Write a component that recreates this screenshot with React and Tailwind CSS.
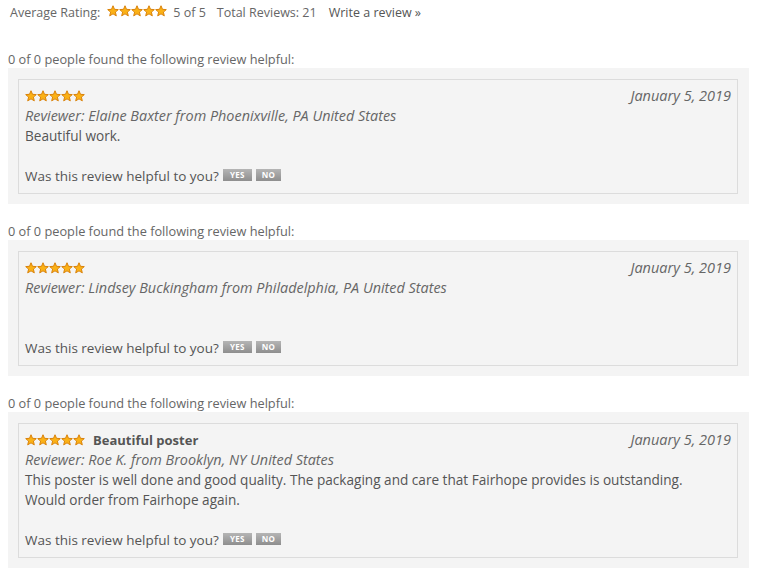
import React from 'react';

const Star = () => (
    <svg width="12" height="12" viewBox="0 0 24 24" className="block">
        <polygon
            points="12,1.5 15,8.6 22.6,9.2 16.8,14.2 18.6,21.7 12,17.7 5.4,21.7 7.2,14.2 1.4,9.2 9,8.6"
            fill="#fbb115"
            stroke="#d9820a"
            strokeWidth="2"
            strokeLinejoin="round"
        />
    </svg>
);

const Stars = () => (
    <span className="inline-flex items-center">
        {[0, 1, 2, 3, 4].map((i) => (
            <Star key={i} />
        ))}
    </span>
);

const VoteButton = ({ label, w }) => (
    <span
        className={`inline-flex items-center justify-center h-[12px] ${w} bg-gradient-to-b from-[#b5b5b5] to-[#8e8e8e] text-white text-[8px] font-bold leading-none tracking-wide`}
    >
        {label}
    </span>
);

const reviews = [
    {
        title: null,
        reviewer: 'Elaine Baxter from Phoenixville, PA United States',
        body: ['Beautiful work.'],
    },
    {
        title: null,
        reviewer: 'Lindsey Buckingham from Philadelphia, PA United States',
        body: [''],
    },
    {
        title: 'Beautiful poster',
        reviewer: 'Roe K. from Brooklyn, NY United States',
        body: [
            'This poster is well done and good quality. The packaging and care that Fairhope provides is outstanding.',
            'Would order from Fairhope again.',
        ],
    },
];

const Review = ({ review }) => (
    <div className="mt-[18px]">
        <div className="px-[8px] h-[18px] text-[12.75px] leading-[18px] text-[#666]">
            0 of 0 people found the following review helpful:
        </div>
        <div className="ml-[8px] mr-[13px] bg-[#f4f4f4] pt-[11px] pb-[10px] pl-[10px] pr-[11px]">
            <div className="border border-[#dcdcdc] px-[6px] pt-[6px] pb-[7px] text-[13.6px] leading-[20px] text-[#555]">
                <div className="flex items-center justify-between h-[20px]">
                    <div className="flex items-center gap-[8px]">
                        <Stars />
                        {review.title && <span className="text-[13px] font-bold text-[#555]">{review.title}</span>}
                    </div>
                    <span className="italic text-[14.5px] text-[#666]">January 5, 2019</span>
                </div>
                <div className="h-[20px] italic text-[14.4px] text-[#666] whitespace-nowrap">Reviewer: {review.reviewer}</div>
                {review.body.map((line, i) => (
                    <div key={i} className="h-[20px] whitespace-nowrap">{line}</div>
                ))}
                <div className="h-[20px]" />
                <div className="flex items-center h-[20px] text-[13.5px]">
                    <span>Was this review helpful to you?</span>
                    <span className="ml-[4px] flex items-center gap-[4px] -mt-[2px]">
                        <VoteButton label="YES" w="w-[29px]" />
                        <VoteButton label="NO" w="w-[25px]" />
                    </span>
                </div>
            </div>
        </div>
    </div>
);

export default function App() {
    return (
        <div className="w-[762px] h-[577px] bg-white overflow-hidden font-['Open_Sans',sans-serif]">
            <div className="flex items-center h-[26px] pl-[10px] text-[12.5px] text-[#666]">
                <span>Average Rating:</span>
                <span className="ml-[7px]"><Stars /></span>
                <span className="ml-[6px]">5 of 5</span>
                <span className="ml-[11px]">Total Reviews: 21</span>
                <span className="ml-[12px] text-[#555]">Write a review »</span>
            </div>
            <div className="pt-[6px]">
                {reviews.map((r, i) => (
                    <Review key={i} review={r} />
                ))}
            </div>
        </div>
    );
}
